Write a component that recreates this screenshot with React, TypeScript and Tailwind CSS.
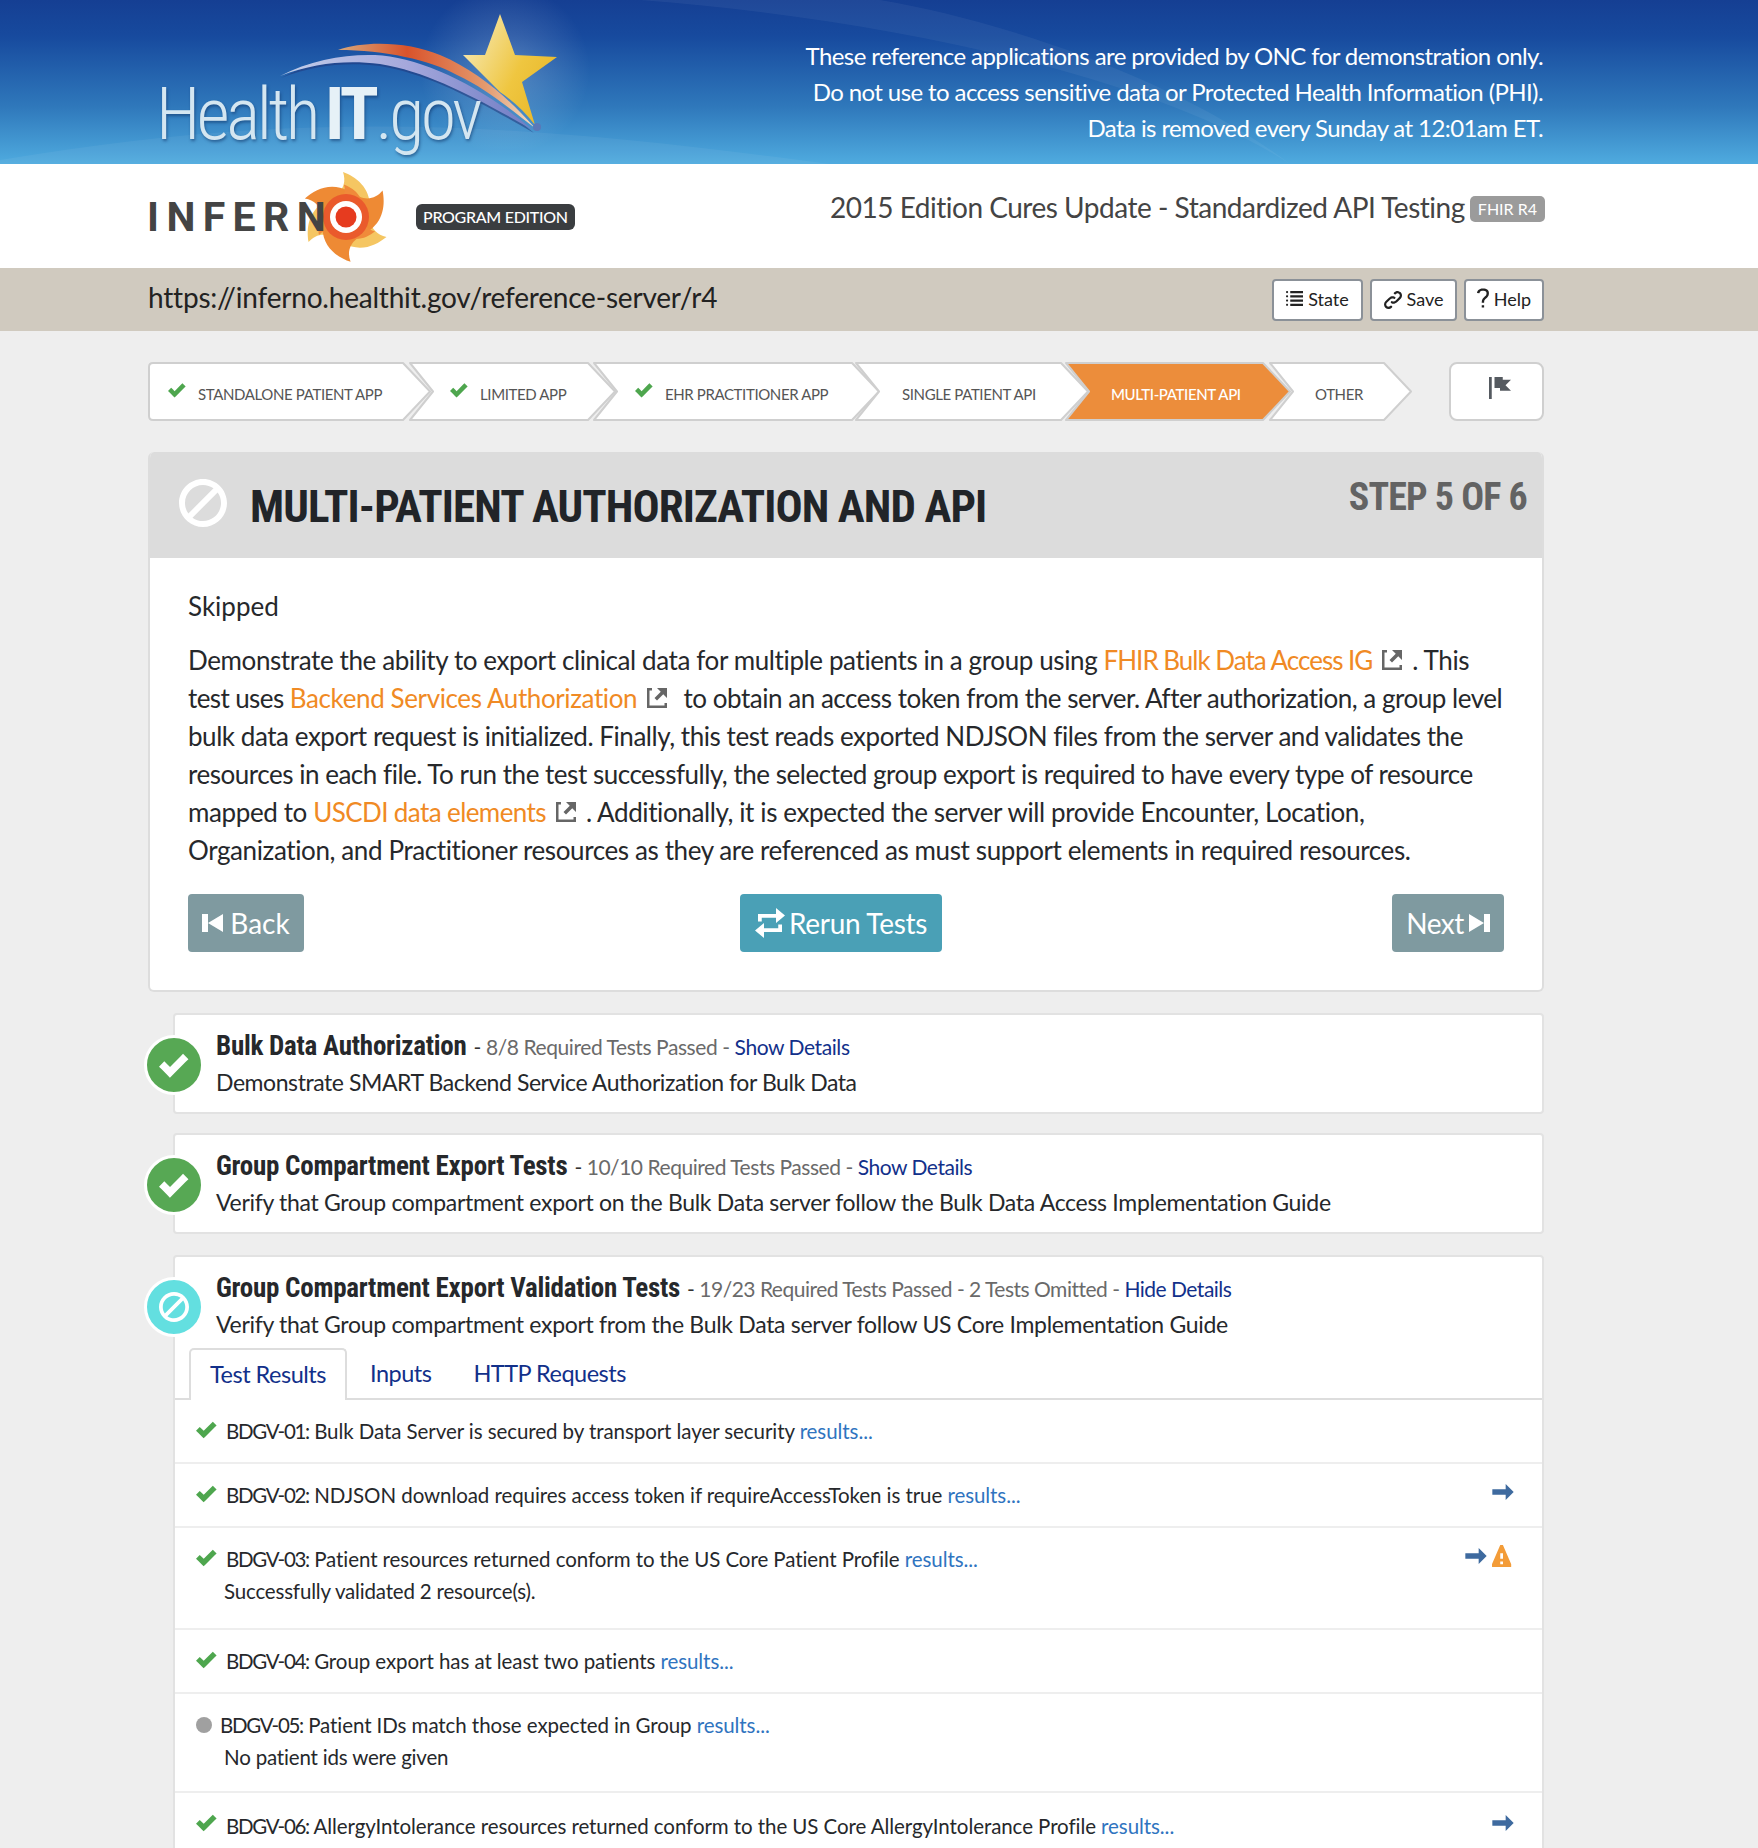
import type { ReactNode } from 'react';

const ICONS: Record<string, { box: string; d: string }> = {
  check: { box: '0 0 8 8', d: 'M6.41 1l-.69.72-2.78 2.78-.81-.78-.72-.72-1.41 1.44.72.72 1.5 1.5.69.72.72-.72 3.5-3.5.72-.72-1.44-1.44z' },
  ban: { box: '0 0 8 8', d: 'M4 0c-2.2 0-4 1.8-4 4s1.8 4 4 4 4-1.8 4-4-1.8-4-4-4zm0 1c.66 0 1.26.21 1.75.56l-4.19 4.19c-.35-.49-.56-1.09-.56-1.75 0-1.66 1.34-3 3-3zm2.44 1.25c.35.49.56 1.09.56 1.75 0 1.66-1.34 3-3 3-.66 0-1.26-.21-1.75-.56l4.19-4.19z' },
  arrow: { box: '0 0 8 6', d: 'M5 0v2h-5v2h5v2l3-3-3-3z' },
  warning: { box: '0 0 8 8', d: 'M3.09 0c-.06 0-.1.04-.13.09l-2.94 6.81c-.02.05-.03.13-.03.19v.81c0 .05.04.09.09.09h6.81c.05 0 .09-.04.09-.09v-.81c0-.05-.01-.14-.03-.19l-2.94-6.81c-.02-.05-.07-.09-.13-.09h-.81zm-.09 3h1v2h-1v-2zm0 3h1v1h-1v-1z' },
  flag: { box: '0 0 8 8', d: 'M0 0v8h1v-8h-1zm2 0v4h2v1h4l-2-1.97 2-2.03h-3v-1h-3z' },
  back: { box: '0 0 7 8', d: 'M0 1v6h2v-6h-2zm2 3l5 3v-6l-5 3z' },
  next: { box: '0 0 7 8', d: 'M0 1v6l5-3-5-3zm5 3v3h2v-6h-2v3z' },
  loop: { box: '0 0 8 8', d: 'M.8 3.6v-2h4.8v-1.6l2.4 2-2.4 2v-1.4h-3.8v1zM7.2 4.4v2h-4.8v1.6l-2.4-2 2.4-2v1.4h3.8v-1z' },
  link: { box: '0 0 8 8', d: 'M5.88.03c-.18.01-.36.03-.53.09-.27.1-.53.25-.75.47a.5.5 0 1 0 .69.69c.11-.11.24-.17.38-.22.35-.12.78-.07 1.06.22.39.39.39 1.04 0 1.44l-1.5 1.5c-.44.44-.8.48-1.06.47-.26-.01-.41-.13-.41-.13a.5.5 0 1 0-.5.88s.34.22.84.25c.5.03 1.2-.16 1.81-.78l1.5-1.5c.78-.78.78-2.04 0-2.81-.28-.28-.61-.45-.97-.53-.18-.04-.38-.04-.56-.03zm-2 2.31c-.5-.02-1.19.15-1.78.75l-1.5 1.5c-.78.78-.78 2.04 0 2.81.56.56 1.36.72 2.06.47.27-.1.53-.25.75-.47a.5.5 0 1 0-.69-.69c-.11.11-.24.17-.38.22-.35.12-.78.07-1.06-.22-.39-.39-.39-1.04 0-1.44l1.5-1.5c.4-.4.75-.45 1.03-.44.28.01.47.09.47.09a.5.5 0 1 0 .44-.88s-.34-.2-.84-.22z' },
  list: { box: '0 0 8 8', d: 'M.5 0c-.28 0-.5.23-.5.5s.22.5.5.5.5-.23.5-.5-.22-.5-.5-.5zm1.5 0v1h6v-1h-6zm-1.5 2c-.28 0-.5.23-.5.5s.22.5.5.5.5-.23.5-.5-.22-.5-.5-.5zm1.5 0v1h6v-1h-6zm-1.5 2c-.28 0-.5.23-.5.5s.22.5.5.5.5-.23.5-.5-.22-.5-.5-.5zm1.5 0v1h6v-1h-6zm-1.5 2c-.28 0-.5.23-.5.5s.22.5.5.5.5-.23.5-.5-.22-.5-.5-.5zm1.5 0v1h6v-1h-6z' },
  question: { box: '0 0 5 8', d: 'M2.47 0c-.85 0-1.48.26-1.88.66-.4.4-.54.9-.59 1.28l1 .13c.03-.25.12-.5.31-.69.19-.19.49-.38 1.16-.38.66 0 1.02.16 1.22.34.2.18.28.4.28.66 0 .83-.34 1.06-.84 1.5-.5.44-1.16 1.08-1.16 2.25v.25h1v-.25c0-.83.31-1.06.81-1.5.5-.44 1.19-1.08 1.19-2.25 0-.48-.17-1.02-.59-1.41-.42-.39-1.07-.59-1.91-.59zm-.5 7v1h1v-1h-1z' },
  external: { box: '0 0 8 8', d: 'M0 0v8h8v-2h-1v1h-6v-6h1v-1h-2zm4 0l1.5 1.5-2.5 2.5 1 1 2.5-2.5 1.5 1.5v-4h-4z' },
};

function Icon({ name, className }: { name: string; className?: string }) {
  const icon = ICONS[name];
  return (
    <svg viewBox={icon.box} className={className} fill="currentColor" aria-hidden="true">
      <path d={icon.d} />
    </svg>
  );
}

function HealthItLogo() {
  return (
    <div className="relative h-[164px] w-[600px]">
      <svg viewBox="0 0 600 164" className="h-[164px] w-[600px]" aria-hidden="true">
        <defs>
          <radialGradient id="halo">
            <stop offset="0" stopColor="#ffffff" stopOpacity="0.22" />
            <stop offset="1" stopColor="#ffffff" stopOpacity="0" />
          </radialGradient>
          <linearGradient id="starFill" x1="0" y1="0" x2="1" y2="0.6">
            <stop offset="0" stopColor="#f7eec6" />
            <stop offset="0.65" stopColor="#efc640" />
            <stop offset="1" stopColor="#e9b92c" />
          </linearGradient>
          <linearGradient id="orangeFill" x1="0" y1="0" x2="1" y2="0">
            <stop offset="0" stopColor="#d9a97c" />
            <stop offset="0.35" stopColor="#d9532b" />
            <stop offset="0.75" stopColor="#e39a6e" />
            <stop offset="1" stopColor="#f3dcc4" />
          </linearGradient>
          <linearGradient id="lavenderFill" x1="0" y1="0" x2="1" y2="0">
            <stop offset="0" stopColor="#c3cfea" />
            <stop offset="0.5" stopColor="#a5a8dc" />
            <stop offset="1" stopColor="#6f7cc4" />
          </linearGradient>
        </defs>
        <circle cx="505" cy="70" r="85" fill="url(#halo)" />
        <path d="M281,78 C310,62 345,56 375,57 C420,59 480,87 534,133 C480,102 430,74 380,66 C345,62 315,65 281,78 Z" fill="#22367a" opacity="0.55" />
        <path d="M280,76 C310,60 345,54 375,55 C420,57 480,85 533,130 C480,100 430,72 380,64 C345,60 315,63 280,76 Z" fill="url(#lavenderFill)" />
        <path d="M338,50 C365,40 410,42 440,55 C480,72 510,100 535,128 C505,105 485,88 457,75 C430,60 385,50 338,50 Z" fill="url(#orangeFill)" />
        <path d="M500,14 L515,55 L557,57 L522,82 L535,125 C525,112 512,100 500,92 L463,55 L485,55 Z" fill="url(#starFill)" />
        <circle cx="537" cy="127" r="4" fill="#5a78b8" />
      </svg>
      <div className="absolute left-[156px] top-[70px] font-['Roboto',sans-serif] text-[72px] font-light leading-[90px] tracking-[-3.5px] text-[#d4e6f1] [font-stretch:75%] [text-shadow:1px_2px_3px_rgba(10,40,90,0.5)]">
        <span>Health</span>
        <span className="ml-[8px] font-bold text-[#e6f1f7]">IT</span>
        <span>.gov</span>
      </div>
    </div>
  );
}

function InfernoLogo() {
  const blade = 'M-3,-45 C10,-40 24,-30 24,-10 L0,0 L-10,-22 C-2,-28 0,-36 -3,-45 Z';
  return (
    <div className="relative h-[104px] w-[250px]">
      <svg viewBox="-50 -50 100 100" className="absolute left-[148px] top-[3px] h-[100px] w-[100px]" aria-hidden="true">
        {[0, 120, 240].map((deg) => (
          <path key={deg} transform={`rotate(${deg})`} d={blade} fill="#f5c662" />
        ))}
        {[58, 178, 298].map((deg) => (
          <path key={deg} transform={`rotate(${deg})`} d={blade} fill="#ee8a34" />
        ))}
        {[0, 120, 240].map((deg) => (
          <path key={deg} transform={`rotate(${deg}) scale(0.72)`} d={blade} fill="#f08a3a" />
        ))}
        <circle cx="0" cy="0" r="23" fill="#ea5a2c" />
        <circle cx="0" cy="0" r="16" fill="#ffffff" />
        <circle cx="0" cy="0" r="10.5" fill="#e63b1f" />
      </svg>
      <div className="absolute -left-[1px] top-[27px] font-['Roboto',sans-serif] text-[41px] font-bold leading-[52px] tracking-[7.4px] text-[#444444]">
        INFERN
      </div>
    </div>
  );
}

const steps = [
  { label: 'STANDALONE PATIENT APP', width: 282, done: true, pad: 'pl-[19px]', notch: false, overlap: '' },
  { label: 'LIMITED APP', width: 207, done: true, pad: 'pl-[41px]', notch: true, overlap: '-ml-[22px]' },
  { label: 'EHR PRACTITIONER APP', width: 287, done: true, pad: 'pl-[42px]', notch: true, overlap: '-ml-[23px]' },
  { label: 'SINGLE PATIENT API', width: 234, done: false, pad: 'pl-[48px]', notch: true, overlap: '-ml-[25px]' },
  { label: 'MULTI-PATIENT API', width: 226, done: false, pad: 'pl-[47px]', notch: true, active: true, overlap: '-ml-[24px]' },
  { label: 'OTHER', width: 143, done: false, pad: 'pl-[47px]', notch: true, overlap: '-ml-[22px]' },
];

function Stepper() {
  return (
    <div className="flex h-[59px] items-stretch">
      {steps.map((step) => {
        const w = step.width;
        const left = step.notch ? 'M2,1 L25,29.5 L2,58' : 'M5,1 Q1,1 1,5 V54 Q1,58 5,58';
        const d = `${left} H${w - 27} L${w},29.5 L${w - 27},1 Z`;
        return (
          <div key={step.label} className={`relative flex items-center ${step.pad} ${step.overlap}`} style={{ width: w }}>
            <svg viewBox={`0 0 ${w + 1} 59`} className="absolute left-0 top-0 h-[59px]" style={{ width: w + 1 }} aria-hidden="true">
              <path d={d} fill={step.active ? '#ec8d3b' : '#ffffff'} stroke="#cfcfcf" strokeWidth="2" strokeLinejoin="round" />
            </svg>
            {step.done && <Icon name="check" className="relative mb-[3px] ml-[1px] mr-[12px] h-[18px] w-[18px] text-[#4ea64e]" />}
            <span className={`relative mt-[6px] text-[15px] leading-none tracking-[-0.38px] ${step.active ? 'font-medium text-white' : 'text-[#555555]'}`}>
              {step.label}
            </span>
          </div>
        );
      })}
      <button className="ml-auto flex h-[59px] w-[95px] items-start justify-center rounded-[8px] border-2 border-[#cfcfcf] bg-white pl-[6px] pt-[13px] text-[#555a60]">
        <Icon name="flag" className="h-[22px] w-[22px]" />
      </button>
    </div>
  );
}

function ToolButton({ icon, label, width, iconClass }: { icon: string; label: string; width: string; iconClass: string }) {
  return (
    <button className={`flex h-[42px] ${width} items-center justify-center gap-[5px] rounded-[4px] border-2 border-[#8b9198] bg-white text-[18px] text-[#222222]`}>
      <Icon name={icon} className={iconClass} />
      {label}
    </button>
  );
}

function ExternalLink({ children, className = '' }: { children: ReactNode; className?: string }) {
  return (
    <span className="whitespace-nowrap text-[#f08a24]">
      <span className={className}>{children}</span>
      <Icon name="external" className="ml-[10px] mr-[10px] inline-block h-[20px] w-[20px] -translate-y-[3px] text-[#666666]" />
    </span>
  );
}

function StatusCircle({ kind, className }: { kind: 'pass' | 'skip'; className: string }) {
  return (
    <div
      className={`absolute -left-[31px] flex h-[60px] w-[60px] items-center justify-center rounded-full border-[3px] border-white ${
        kind === 'pass' ? 'bg-[#57a854]' : 'bg-[#63dfe0]'
      } ${className}`}
    >
      <Icon name={kind === 'pass' ? 'check' : 'ban'} className="h-[30px] w-[30px] text-white" />
    </div>
  );
}

function TestTitle({ title, meta, link, metaClass }: { title: string; meta: string; link: string; metaClass: string }) {
  return (
    <div className="flex items-baseline leading-[34px]">
      <span className="font-['Roboto',sans-serif] text-[27px] font-bold tracking-[-0.25px] text-[#26282b] [font-stretch:75%]">{title}</span>
      <span className={`ml-[7px] text-[21px] text-[#6a6a6a] ${metaClass}`}>
        <span className="text-[#333333]">-</span> {meta} -{' '}
        <span className="text-[#12308a]">{link}</span>
      </span>
    </div>
  );
}

const results = [
  { id: 'BDGV-01', text: 'Bulk Data Server is secured by transport layer security', h: 'h-[64px]', top: 'pt-[16px]' },
  { id: 'BDGV-02', text: 'NDJSON download requires access token if requireAccessToken is true', h: 'h-[64px]', top: 'pt-[16px]', arrow: true },
  { id: 'BDGV-03', text: 'Patient resources returned conform to the US Core Patient Profile', h: 'h-[102px]', top: 'pt-[16px]', arrow: true, warn: true, sub: 'Successfully validated 2 resource(s).' },
  { id: 'BDGV-04', text: 'Group export has at least two patients', h: 'h-[64px]', top: 'pt-[16px]' },
  { id: 'BDGV-05', text: 'Patient IDs match those expected in Group', h: 'h-[99px]', top: 'pt-[16px]', omit: true, sub: 'No patient ids were given' },
  { id: 'BDGV-06', text: 'AllergyIntolerance resources returned conform to the US Core AllergyIntolerance Profile', h: 'h-[64px]', top: 'pt-[18px]', arrow: true },
];

function ResultRow({ row }: { row: (typeof results)[number] }) {
  return (
    <div className={`relative border-b-2 border-[#eeeeee] pl-[51px] pr-[28px] ${row.top} ${row.h}`}>
      {row.omit ? (
        <span className="absolute left-[21px] top-[23px] h-[16px] w-[16px] rounded-full bg-[#a0a0a0]" />
      ) : (
        <Icon name="check" className="absolute left-[21px] top-[19px] h-[21px] w-[21px] text-[#4ea64e]" />
      )}
      <div className="flex justify-between">
        <p className={`text-[20.5px] leading-[30px] tracking-[-0.07px] text-[#26282b] ${row.omit ? '-ml-[6px]' : ''}`}>
          <span className="tracking-[-1.3px]">{row.id}:</span> {row.text} <span className="text-[#2f74c0]">results...</span>
        </p>
        <div className="flex items-start gap-[5px] pt-[4px]">
          {row.arrow && <Icon name="arrow" className="h-[16px] w-[22px] text-[#3e6a9f]" />}
          {row.warn && <Icon name="warning" className="-mt-[3px] h-[22px] w-[22px] text-[#f39c38]" />}
        </div>
      </div>
      {row.sub && <p className="-ml-[2px] mt-[2px] text-[20.5px] leading-[30px] tracking-[-0.18px] text-[#26282b]">{row.sub}</p>}
    </div>
  );
}

export default function App() {
  return (
    <div className="h-[1848px] overflow-hidden bg-[#eeeeee] font-['Lato',sans-serif]">
      <header className="relative flex h-[164px] justify-between overflow-hidden bg-[linear-gradient(180deg,#153f93_0%,#174a9e_22%,#2f78bb_65%,#4fabdf_100%)] pr-[215px]">
        <svg viewBox="0 0 1758 164" className="absolute left-0 top-0 h-[164px] w-[1758px]" aria-hidden="true">
          <path d="M640,0 C900,20 1160,80 1290,164 H0 V160 C300,110 500,120 830,164 L1290,164 C1180,80 1000,20 880,0 Z" fill="#ffffff" opacity="0.05" />
        </svg>
        <HealthItLogo />
        <div className="relative pt-[38px] text-right text-[24px] leading-[36px] tracking-[-0.6px] text-white">
          <p>These reference applications are provided by ONC for demonstration only.</p>
          <p>Do not use to access sensitive data or Protected Health Information (PHI).</p>
          <p>Data is removed every Sunday at 12:01am ET.</p>
        </div>
      </header>

      <div className="flex h-[104px] justify-between bg-white pl-[148px] pr-[213px]">
        <div className="flex items-start">
          <InfernoLogo />
          <span className="ml-[18px] mt-[40px] rounded-[6px] bg-[#3a3d40] px-[7px] text-[16px] font-medium leading-[26px] tracking-[-0.3px] text-white">PROGRAM EDITION</span>
        </div>
        <div className="flex items-start gap-[5px] pt-[22px]">
          <span className="text-[28px] leading-[42px] tracking-[-0.48px] text-[#444444]">2015 Edition Cures Update - Standardized API Testing</span>
          <span className="mt-[10px] rounded-[5px] bg-[#9b9b9b] px-[8px] text-[16px] leading-[26px] text-white">FHIR R4</span>
        </div>
      </div>

      <div className="flex h-[63px] items-center justify-between bg-[#d0cabf] pl-[148px] pr-[214px]">
        <span className="-mt-[6px] text-[28px] tracking-[-0.2px] text-[#222222]">https://inferno.healthit.gov/reference-server/r4</span>
        <div className="flex gap-[7px]">
          <ToolButton icon="list" label="State" width="w-[91px]" iconClass="h-[17px] w-[17px]" />
          <ToolButton icon="link" label="Save" width="w-[87px]" iconClass="h-[18px] w-[18px]" />
          <ToolButton icon="question" label="Help" width="w-[80px]" iconClass="mb-[4px] h-[20px] w-[12px]" />
        </div>
      </div>

      <main className="ml-[148px] w-[1396px] pt-[31px]">
        <Stepper />

        <section className="mt-[31px] overflow-hidden rounded-[6px] border-2 border-t-0 border-[#dddddd] bg-white">
          <div className="-mx-[2px] flex h-[106px] justify-between bg-[#dcdcdc] pl-[31px] pr-[17px]">
            <div className="flex items-center gap-[23px] pt-[4px]">
              <Icon name="ban" className="-mt-[8px] h-[48px] w-[48px] text-white" />
              <h1 className="font-['Roboto',sans-serif] text-[45px] font-bold tracking-[-0.9px] text-[#212428] [font-stretch:75%]">MULTI-PATIENT AUTHORIZATION AND API</h1>
            </div>
            <div className="pt-[17px] font-['Roboto',sans-serif] text-[38px] font-bold tracking-[-0.8px] text-[#636363] [font-stretch:75%]">STEP 5 OF 6</div>
          </div>
          <div className="px-[38px] pb-[38px] pt-[29px]">
            <p className="pt-[1px] text-[26px] leading-[37px] text-[#26282b]">Skipped</p>
            <div className="mt-[16px] whitespace-nowrap text-[26px] leading-[38px] tracking-[-0.39px] text-[#26282b]">
              <p>
                Demonstrate the ability to export clinical data for multiple patients in a group using{' '}
                <ExternalLink className="tracking-[-1px]">FHIR Bulk Data Access IG</ExternalLink>. This
              </p>
              <p>
                <span className="tracking-[-0.6px]">test uses</span> <ExternalLink>Backend Services Authorization</ExternalLink>{' '}
                <span className="tracking-[-0.47px]">to obtain an access token from the server. After authorization, a group level</span>
              </p>
              <p className="tracking-[-0.45px]">bulk data export request is initialized. Finally, this test reads exported NDJSON files from the server and validates the</p>
              <p className="tracking-[-0.475px]">resources in each file. To run the test successfully, the selected group export is required to have every type of resource</p>
              <p>
                mapped to <ExternalLink className="tracking-[-0.6px]">USCDI data elements</ExternalLink>. Additionally, it is expected the server will provide Encounter, Location,
              </p>
              <p>Organization, and Practitioner resources as they are referenced as must support elements in required resources.</p>
            </div>
            <div className="mt-[25px] flex justify-between">
              <button className="flex h-[58px] w-[116px] items-center justify-center gap-[7px] rounded-[4px] bg-[#7f9aa0] text-[28px] text-white">
                <Icon name="back" className="h-[24px] w-[21px]" />
                Back
              </button>
              <button className="mr-[14px] flex h-[58px] w-[202px] items-center justify-center gap-[4px] rounded-[4px] bg-[#4aa0b6] text-[28px] tracking-[-0.3px] text-white">
                <Icon name="loop" className="h-[30px] w-[30px]" />
                Rerun Tests
              </button>
              <button className="flex h-[58px] w-[112px] items-center justify-center gap-[5px] rounded-[4px] bg-[#7f9aa0] text-[28px] tracking-[-0.5px] text-white">
                Next
                <Icon name="next" className="h-[24px] w-[21px]" />
              </button>
            </div>
          </div>
        </section>

        <div className="ml-[25px] mt-[21px]">
          <section className="relative h-[101px] rounded-[4px] border-2 border-[#e2e2e2] bg-white pl-[41px] pt-[14px]">
            <StatusCircle kind="pass" className="top-[20px]" />
            <TestTitle title="Bulk Data Authorization" meta="8/8 Required Tests Passed" link="Show Details" metaClass="tracking-[-0.42px]" />
            <p className="text-[23px] leading-[36px] tracking-[-0.43px] text-[#26282b]">Demonstrate SMART Backend Service Authorization for Bulk Data</p>
          </section>
          <section className="relative mt-[19px] h-[101px] rounded-[4px] border-2 border-[#e2e2e2] bg-white pl-[41px] pt-[14px]">
            <StatusCircle kind="pass" className="top-[20px]" />
            <TestTitle title="Group Compartment Export Tests" meta="10/10 Required Tests Passed" link="Show Details" metaClass="tracking-[-0.46px]" />
            <p className="text-[23px] leading-[36px] tracking-[-0.3px] text-[#26282b]">Verify that Group compartment export on the Bulk Data server follow the Bulk Data Access Implementation Guide</p>
          </section>
          <section className="relative mt-[21px] rounded-[4px] border-2 border-[#e2e2e2] bg-white pt-[14px]">
            <StatusCircle kind="skip" className="top-[20px]" />
            <div className="pl-[41px]">
              <TestTitle title="Group Compartment Export Validation Tests" meta="19/23 Required Tests Passed - 2 Tests Omitted" link="Hide Details" metaClass="tracking-[-0.5px]" />
              <p className="text-[23px] leading-[36px] tracking-[-0.3px] text-[#26282b]">Verify that Group compartment export from the Bulk Data server follow US Core Implementation Guide</p>
            </div>
            <div className="mt-[8px] flex h-[50px] items-end border-b-2 border-[#dddddd] pl-[14px] text-[23.5px] tracking-[-0.5px] text-[#12308a]">
              <span className="-mb-[2px] flex h-[52px] w-[158px] items-center justify-center rounded-t-[5px] border-2 border-b-0 border-[#dddddd] bg-white pb-[1px]">Test Results</span>
              <span className="flex h-[48px] items-center pl-[23px]">Inputs</span>
              <span className="flex h-[48px] items-center pl-[42px]">HTTP Requests</span>
            </div>
            {results.map((row) => (
              <ResultRow key={row.id} row={row} />
            ))}
          </section>
        </div>
      </main>
    </div>
  );
}
